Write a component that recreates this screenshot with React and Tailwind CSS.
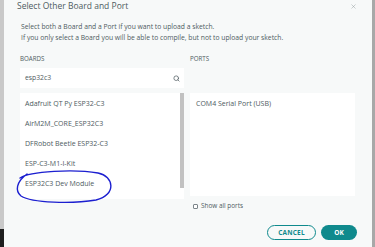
import { Search, X } from 'lucide-react'

const boards = [
  'Adafruit QT Py ESP32-C3',
  'AirM2M_CORE_ESP32C3',
  'DFRobot Beetle ESP32-C3',
  'ESP-C3-M1-I-Kit',
  'ESP32C3 Dev Module',
]

export default function App() {
  return (
    <div
      className="w-[375px] h-[247px] flex overflow-hidden text-[#4e5b61]"
      style={{ fontFamily: '"Open Sans", "Noto Sans", sans-serif' }}
    >
      {/* left edge of the window behind */}
      <div className="w-[4px] flex flex-col">
        <div className="flex-1 bg-[#c9c9c9]" />
        <div className="h-[18px] bg-[#1e1e1e]" />
      </div>

      {/* dialog */}
      <div className="flex-1 bg-[#f7f9f9] flex flex-col">
        <div className="h-[12px] flex items-center justify-between pl-[13px] pr-[15px]">
          <span className="text-[8.5px] leading-[12px] text-[#4e5b61]">Select Other Board and Port</span>
          <X size={7} strokeWidth={1.5} className="text-[#8a9296]" />
        </div>

        <div className="pl-[17px] mt-[9px] text-[6.75px] leading-[11px]">
          <p>Select both a Board and a Port if you want to upload a sketch.</p>
          <p>If you only select a Board you will be able to compile, but not to upload your sketch.</p>
        </div>

        <div className="flex gap-[6px] pl-[16px] pr-[17px] mt-[11px]">
          {/* boards */}
          <div className="w-[164px] flex flex-col">
            <div className="h-[10px] text-[6.2px] leading-[10px] uppercase">Boards</div>
            <div className="mt-[4px] h-[20px] bg-white flex items-center justify-between pl-[5px] pr-[4px]">
              <span className="text-[6.8px]">esp32c3</span>
              <Search size={7} strokeWidth={2.5} className="text-[#4e5b61]" />
            </div>
            <div className="relative mt-[5px] h-[106px] bg-white flex">
              <div className="flex-1 flex flex-col">
                {boards.map((b) => (
                  <div key={b} className="h-[20px] flex items-center pl-[5px] text-[7px] first:mt-[1px]">
                    {b}
                  </div>
                ))}
              </div>
              <div className="w-[4px] h-[95px] bg-[#c1c1c1]" />
              <svg
                className="absolute left-[-4px] top-[76px] w-[100px] h-[36px] pointer-events-none overflow-visible"
                viewBox="16 168 100 36"
              >
                <path
                  d="M20 177 C 30 170, 75 168, 98 172 C 114 175, 117 194, 96 199 C 72 203, 32 202, 21 195 C 15 190, 16 181, 27 173"
                  fill="none"
                  stroke="#1c1fd0"
                  strokeWidth="1.4"
                  strokeLinecap="round"
                />
              </svg>
            </div>
          </div>

          {/* ports */}
          <div className="flex-1 flex flex-col">
            <div className="h-[10px] text-[6.2px] leading-[10px] uppercase">Ports</div>
            <div className="mt-[29px] h-[103px] bg-white pl-[6px]">
              <div className="h-[20px] flex items-center text-[7px] mt-[1px]">COM4 Serial Port (USB)</div>
            </div>
            <label className="mt-[6px] ml-[3px] flex items-center gap-[3px] text-[6.4px] leading-[8px]">
              <span className="w-[5px] h-[5px] border border-[#7c858a] rounded-[1px] bg-white" />
              Show all ports
            </label>
          </div>
        </div>

        <div className="mt-[15px] flex justify-end gap-[5px] pr-[15px]">
          <button className="w-[49px] h-[15px] rounded-full border border-[#0f8a8d] text-[#0f8a8d] text-[6.5px] font-bold tracking-[0.2px]">
            CANCEL
          </button>
          <button className="w-[36px] h-[15px] rounded-full bg-[#0f8a8d] text-white text-[6.5px] font-bold">
            OK
          </button>
        </div>
      </div>

      {/* right edge */}
      <div className="w-[3px] bg-[#a8a8a8]" />
    </div>
  )
}
